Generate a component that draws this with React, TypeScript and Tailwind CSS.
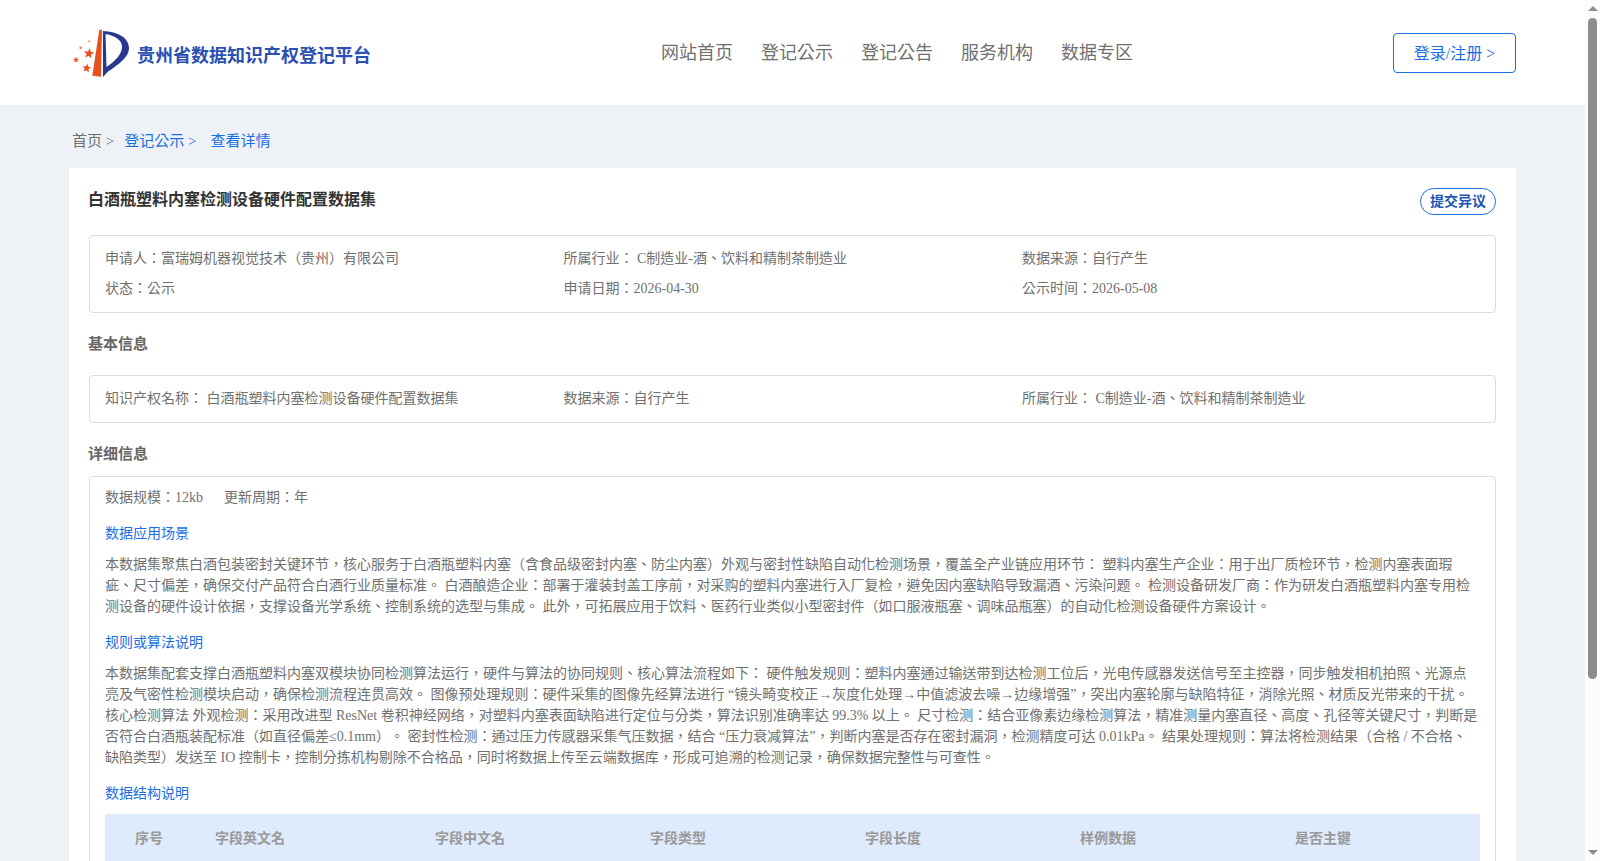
const starPoints = (cx: number, cy: number, r: number) =>
  Array.from({ length: 10 }, (_, i) => {
    const radius = i % 2 === 0 ? r : r * 0.42;
    const angle = -Math.PI / 2 + 0.15 + (i * Math.PI) / 5;
    return `${cx + radius * Math.cos(angle)},${cy + radius * Math.sin(angle)}`;
  }).join(" ");

const Logo = () => (
  <svg width="60" height="50" viewBox="0 0 60 50" className="shrink-0">
    <path d="M27.3 1.8 L30 1.8 L29 48.8 L20.3 47.8 Z" fill="#e8501f" />
    <path
      fillRule="evenodd"
      d="M31 3 C46 3.5 57 10 57 20 C57 30 44 38 35.5 44 L31 49 Z M33.5 6 C44 8 50.5 12.5 50 19.5 C49.5 27 42 34 34.5 39 Z"
      fill="#26388f"
    />
    <polygon points={starPoints(17, 25.5, 5.5)} fill="#e8501f" />
    <polygon points={starPoints(4, 32, 3.2)} fill="#e8501f" />
    <polygon points={starPoints(14.7, 40.2, 4.8)} fill="#e8501f" />
    <circle cx="8.7" cy="19.8" r="1.4" fill="#ee8a66" />
    <circle cx="17.3" cy="13.2" r="1" fill="#ee8a66" />
  </svg>
);

const navItems = ["网站首页", "登记公示", "登记公告", "服务机构", "数据专区"];
const columns = [
  { name: "序号", cls: "w-[110px] pl-[30px]" },
  { name: "字段英文名", cls: "w-[220px]" },
  { name: "字段中文名", cls: "w-[215px]" },
  { name: "字段类型", cls: "w-[215px]" },
  { name: "字段长度", cls: "w-[215px]" },
  { name: "样例数据", cls: "w-[215px]" },
  { name: "是否主键", cls: "w-[185px]" },
];

const InfoCell = ({ children }: { children: React.ReactNode }) => (
  <div className="w-[458.5px] shrink-0 text-[14px] leading-[21px] text-[#707070]">{children}</div>
);

const Scrollbar = () => (
  <aside className="flex h-full w-[15px] shrink-0 flex-col items-center bg-[#fcfcfc]">
    <div className="mt-[6px] h-0 w-0 border-x-[5px] border-b-[5px] border-x-transparent border-b-[#8c8c8c]" />
    <div className="mt-[7px] h-[661px] w-[9px] rounded-[5px] bg-[#8c8c8c]" />
    <div className="mt-auto mb-[6px] h-0 w-0 border-x-[5px] border-t-[5px] border-x-transparent border-t-[#8c8c8c]" />
  </aside>
);

const App = () => {
  return (
    <div className="flex h-screen overflow-hidden font-['Liberation_Serif','Noto_Sans_CJK_TC',serif] [text-spacing-trim:space-all]">
      <main className="min-w-0 flex-1 overflow-hidden bg-[#eef2f6]">
        <header className="flex h-[105px] items-center bg-white pr-[69px] pl-[72px]">
          <div className="flex w-[490px] items-center gap-[5px]">
            <Logo />
            <span className="pt-[8px] text-[18px] font-bold whitespace-nowrap text-[#2a4fb5]">贵州省数据知识产权登记平台</span>
          </div>
          <nav className="ml-[99px] flex gap-[28px] pt-[1px]">
            {navItems.map((item) => (
              <a key={item} className="text-[18px] text-[#707070]">{item}</a>
            ))}
          </nav>
          <button className="ml-auto h-[40px] w-[123px] rounded-[4px] border border-[#1a6ee6] pt-[2px] text-[16px] text-[#1a6ee6]">
            登录/注册 &gt;
          </button>
        </header>

        <div className="ml-[69px] w-[1447px]">
          <div className="flex h-[63px] items-center pt-[9px] pl-[3px] text-[15px] text-[#707070]">
            首页 &gt;
            <span className="ml-[10px] text-[#1a6ee6]">登记公示 &gt;</span>
            <span className="ml-[14px] text-[#1a6ee6]">查看详情</span>
          </div>

          <div className="bg-white px-[20px] pt-[20px] pb-[20px]">
            <div className="flex items-start justify-between">
              <h1 className="ml-[-1px] text-[16px] font-bold text-[#333]">白酒瓶塑料内塞检测设备硬件配置数据集</h1>
              <button className="h-[27px] w-[76px] rounded-[14px] border border-[#1a6ee6] text-[14px] font-bold text-[#1c57b8]">提交异议</button>
            </div>

            <div className="mt-[20px] rounded-[4px] border border-[#ddd] px-[15px] pt-[12px] pb-[13px]">
              <div className="flex">
                <InfoCell>申请人：富瑞姆机器视觉技术（贵州）有限公司</InfoCell>
                <InfoCell>所属行业： C制造业-酒、饮料和精制茶制造业</InfoCell>
                <InfoCell>数据来源：自行产生</InfoCell>
              </div>
              <div className="mt-[9px] flex">
                <InfoCell>状态：公示</InfoCell>
                <InfoCell>申请日期：2026-04-30</InfoCell>
                <InfoCell>公示时间：2026-05-08</InfoCell>
              </div>
            </div>

            <h2 className="mt-[20px] ml-[-1px] text-[15px] font-bold text-[#666]">基本信息</h2>
            <div className="mt-[19px] rounded-[4px] border border-[#ddd] px-[15px] pt-[12px] pb-[13px]">
              <div className="flex">
                <InfoCell>知识产权名称： 白酒瓶塑料内塞检测设备硬件配置数据集</InfoCell>
                <InfoCell>数据来源：自行产生</InfoCell>
                <InfoCell>所属行业： C制造业-酒、饮料和精制茶制造业</InfoCell>
              </div>
            </div>

            <h2 className="mt-[20px] ml-[-1px] text-[15px] font-bold text-[#666]">详细信息</h2>
            <div className="mt-[11px] rounded-[4px] border border-[#ddd] px-[15px] pt-[10px] pb-[20px] text-[14px] leading-[21px] text-[#707070]">
              <p>数据规模：12kb<span className="ml-[21px]">更新周期：年</span></p>
              <h3 className="mt-[15px] text-[#1a6ee6]">数据应用场景</h3>
              <p className="mt-[10px]">本数据集聚焦白酒包装密封关键环节，核心服务于白酒瓶塑料内塞（含食品级密封内塞、防尘内塞）外观与密封性缺陷自动化检测场景，覆盖全产业链应用环节： 塑料内塞生产企业：用于出厂质检环节，检测内塞表面瑕疵、尺寸偏差，确保交付产品符合白酒行业质量标准。 白酒酿造企业：部署于灌装封盖工序前，对采购的塑料内塞进行入厂复检，避免因内塞缺陷导致漏酒、污染问题。 检测设备研发厂商：作为研发白酒瓶塑料内塞专用检测设备的硬件设计依据，支撑设备光学系统、控制系统的选型与集成。 此外，可拓展应用于饮料、医药行业类似小型密封件（如口服液瓶塞、调味品瓶塞）的自动化检测设备硬件方案设计。</p>
              <h3 className="mt-[15px] text-[#1a6ee6]">规则或算法说明</h3>
              <p className="mt-[10px]">本数据集配套支撑白酒瓶塑料内塞双模块协同检测算法运行，硬件与算法的协同规则、核心算法流程如下： 硬件触发规则：塑料内塞通过输送带到达检测工位后，光电传感器发送信号至主控器，同步触发相机拍照、光源点亮及气密性检测模块启动，确保检测流程连贯高效。 图像预处理规则：硬件采集的图像先经算法进行 “镜头畸变校正→灰度化处理→中值滤波去噪→边缘增强”，突出内塞轮廓与缺陷特征，消除光照、材质反光带来的干扰。 核心检测算法 外观检测：采用改进型 ResNet 卷积神经网络，对塑料内塞表面缺陷进行定位与分类，算法识别准确率达 99.3% 以上。 尺寸检测：结合亚像素边缘检测算法，精准测量内塞直径、高度、孔径等关键尺寸，判断是否符合白酒瓶装配标准（如直径偏差≤0.1mm）。 密封性检测：通过压力传感器采集气压数据，结合 “压力衰减算法”，判断内塞是否存在密封漏洞，检测精度可达 0.01kPa。 结果处理规则：算法将检测结果（合格 / 不合格、缺陷类型）发送至 IO 控制卡，控制分拣机构剔除不合格品，同时将数据上传至云端数据库，形成可追溯的检测记录，确保数据完整性与可查性。</p>
              <h3 className="mt-[15px] text-[#1a6ee6]">数据结构说明</h3>
              <div className="mt-[10px] flex h-[48px] items-center bg-[#deebfc] font-bold text-[#999]">
                {columns.map((col) => (
                  <div key={col.name} className={col.cls}>{col.name}</div>
                ))}
              </div>
            </div>
          </div>
        </div>
      </main>
      <Scrollbar />
    </div>
  );
};

export default App;
